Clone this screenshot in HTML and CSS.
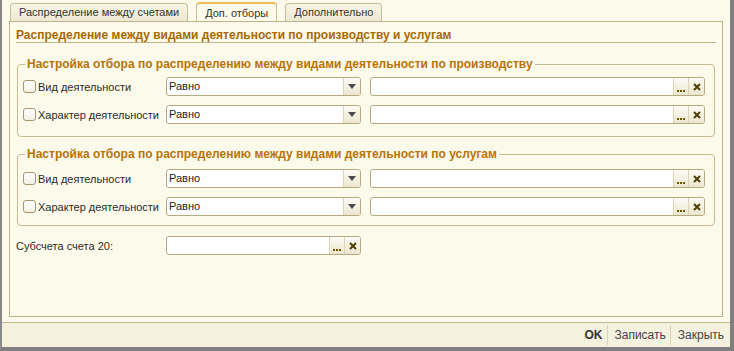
FILE: index.html
```html
<!DOCTYPE html>
<html lang="ru">
<head>
    <meta charset="UTF-8">
    <meta name="viewport" content="width=device-width, initial-scale=1.0">
    <title>Доп. отборы</title>
    <link rel="stylesheet" href="styles.css">
</head>
<body>
    <div class="window">
        <div class="main">
            <div class="tabs">
                <div class="tab">Распределение между счетами</div>
                <div class="tab active">Доп. отборы</div>
                <div class="tab">Дополнительно</div>
            </div>

            <div class="panel">
                <div class="heading">Распределение между видами деятельности по производству и услугам</div>

                <!-- производство -->
                <fieldset class="group">
                    <legend>Настройка отбора по распределению между видами деятельности по производству</legend>
                    <div class="row">
                        <label class="check"><span class="box"></span>Вид деятельности</label>
                        <div class="select">
                            <span class="select-value">Равно</span>
                            <span class="arrow"><svg width="8" height="5" viewBox="0 0 8 5"><path d="M0 0h8L4 5z" fill="#4b4b4b"/></svg></span>
                        </div>
                        <div class="field">
                            <span class="value"></span>
                            <span class="btn dots"><i></i><i></i><i></i></span>
                            <span class="btn clear"><svg width="8" height="8" viewBox="0 0 8 8"><path d="M1 1l6 6M7 1L1 7" stroke="#4f3f00" stroke-width="2"/></svg></span>
                        </div>
                    </div>
                    <div class="row">
                        <label class="check"><span class="box"></span>Характер деятельности</label>
                        <div class="select">
                            <span class="select-value">Равно</span>
                            <span class="arrow"><svg width="8" height="5" viewBox="0 0 8 5"><path d="M0 0h8L4 5z" fill="#4b4b4b"/></svg></span>
                        </div>
                        <div class="field">
                            <span class="value"></span>
                            <span class="btn dots"><i></i><i></i><i></i></span>
                            <span class="btn clear"><svg width="8" height="8" viewBox="0 0 8 8"><path d="M1 1l6 6M7 1L1 7" stroke="#4f3f00" stroke-width="2"/></svg></span>
                        </div>
                    </div>
                </fieldset>

                <!-- услуги -->
                <fieldset class="group services">
                    <legend>Настройка отбора по распределению между видами деятельности по услугам</legend>
                    <div class="row">
                        <label class="check"><span class="box"></span>Вид деятельности</label>
                        <div class="select">
                            <span class="select-value">Равно</span>
                            <span class="arrow"><svg width="8" height="5" viewBox="0 0 8 5"><path d="M0 0h8L4 5z" fill="#4b4b4b"/></svg></span>
                        </div>
                        <div class="field">
                            <span class="value"></span>
                            <span class="btn dots"><i></i><i></i><i></i></span>
                            <span class="btn clear"><svg width="8" height="8" viewBox="0 0 8 8"><path d="M1 1l6 6M7 1L1 7" stroke="#4f3f00" stroke-width="2"/></svg></span>
                        </div>
                    </div>
                    <div class="row">
                        <label class="check"><span class="box"></span>Характер деятельности</label>
                        <div class="select">
                            <span class="select-value">Равно</span>
                            <span class="arrow"><svg width="8" height="5" viewBox="0 0 8 5"><path d="M0 0h8L4 5z" fill="#4b4b4b"/></svg></span>
                        </div>
                        <div class="field">
                            <span class="value"></span>
                            <span class="btn dots"><i></i><i></i><i></i></span>
                            <span class="btn clear"><svg width="8" height="8" viewBox="0 0 8 8"><path d="M1 1l6 6M7 1L1 7" stroke="#4f3f00" stroke-width="2"/></svg></span>
                        </div>
                    </div>
                </fieldset>

                <div class="sub-row">
                    <span class="sub-label">Субсчета счета 20:</span>
                    <div class="field short">
                        <span class="value"></span>
                        <span class="btn dots"><i></i><i></i><i></i></span>
                        <span class="btn clear"><svg width="8" height="8" viewBox="0 0 8 8"><path d="M1 1l6 6M7 1L1 7" stroke="#4f3f00" stroke-width="2"/></svg></span>
                    </div>
                </div>
            </div>
        </div>

        <div class="footer">
            <span class="cmd ok">OK</span>
            <span class="cmd">Записать</span>
            <span class="cmd">Закрыть</span>
        </div>
    </div>
</body>
</html>
```

FILE: styles.css
```css
body {
    margin: 0;
    font-family: "Liberation Sans", Arial, sans-serif;
    font-size: 11px;
    color: #2b2b2b;
    background-color: #fcfaeb;
}
.window {
    box-sizing: border-box;
    width: 734px;
    height: 351px;
    border-left: 2px solid #8a8a8a;
    border-right: 4px solid #7f7f7f;
    border-bottom: 4px solid #7f7f7f;
    background-color: #fcfaeb;
}
.main {
    height: 322px;
    box-sizing: border-box;
    padding: 3px 7px 0 7px;
}

/* tabs */
.tabs {
    display: flex;
    gap: 8px;
    height: 18px;
    padding-left: 1px;
}
.tab {
    box-sizing: border-box;
    height: 18px;
    padding: 0 8px;
    line-height: 17px;
    border: 1px solid #c7bd98;
    border-bottom: none;
    border-radius: 4px 4px 0 0;
    background: linear-gradient(#f8f5e6, #ede8d1);
    color: #333;
    white-space: nowrap;
}
.tab.active {
    height: 19px;
    margin-top: -1px;
    line-height: 18px;
    border-top: 2px solid #e9bd5c;
    background: #fcfaeb;
}

/* panel */
.panel {
    box-sizing: border-box;
    height: 296px;
    padding: 0 6px;
    border: 1px solid #bdb28a;
    background-color: #fcfaeb;
}
.heading {
    padding-top: 6px;
    line-height: 14px;
    font-size: 12px;
    font-weight: bold;
    color: #a86a00;
    border-bottom: 1px solid #bdb28a;
}
.group {
    margin: 14px 1px 0 1px;
    padding: 6px 9px 12px 5px;
    border: 1px solid #c6bb93;
    border-radius: 4px;
}
.group.services {
    margin-top: 10px;
    padding-top: 8px;
    padding-bottom: 9px;
}
.group legend {
    margin-left: 2px;
    padding: 0 2px;
    line-height: 14px;
    font-size: 12px;
    font-weight: bold;
    color: #b8730a;
}
.row {
    display: grid;
    grid-template-columns: 134px 195px 1fr;
    column-gap: 9px;
    align-items: center;
}
.row + .row {
    margin-top: 9px;
}
.check {
    display: flex;
    align-items: center;
    gap: 2px;
    white-space: nowrap;
}
.box {
    flex: none;
    box-sizing: border-box;
    width: 13px;
    height: 13px;
    border: 1px solid #a3976f;
    border-radius: 3px;
    background: linear-gradient(#fff, #f3f0e2);
}

/* inputs */
.select, .field {
    box-sizing: border-box;
    height: 19px;
    display: flex;
    border: 1px solid #b4a97f;
    border-radius: 3px;
    background-color: #fff;
    overflow: hidden;
}
.select-value {
    flex: 1;
    padding-left: 2px;
    line-height: 17px;
    color: #1e1e1e;
}
.arrow {
    width: 16px;
    display: flex;
    align-items: center;
    justify-content: center;
    border-left: 1px solid #ddd4b4;
    background: linear-gradient(#fdfcf6, #ebe6cf);
}
.value {
    flex: 1;
}
.btn {
    width: 15px;
    display: flex;
    align-items: center;
    justify-content: center;
    border-left: 1px solid #ddd4b4;
    background: linear-gradient(#fdfcf6, #ebe6cf);
}
.dots {
    align-items: flex-end;
    gap: 1px;
    box-sizing: border-box;
    padding-bottom: 3px;
}
.dots i {
    width: 2px;
    height: 2px;
    background-color: #6b5600;
}
.sub-row {
    display: flex;
    align-items: center;
    margin-top: 10px;
}
.sub-label {
    width: 150px;
}
.field.short {
    width: 195px;
}

/* footer */
.footer {
    height: 24px;
    display: flex;
    justify-content: flex-end;
    align-items: center;
    border-top: 1px solid #c2b78f;
    background-color: #f4f1de;
}
.cmd {
    padding: 0 4px 0 7px;
    line-height: 20px;
    font-size: 12px;
    color: #444;
}
.cmd + .cmd {
    border-left: 1px solid #ddd5b8;
}
.cmd:last-child {
    padding-right: 6px;
}
.cmd.ok {
    font-weight: bold;
    color: #333;
}
```
